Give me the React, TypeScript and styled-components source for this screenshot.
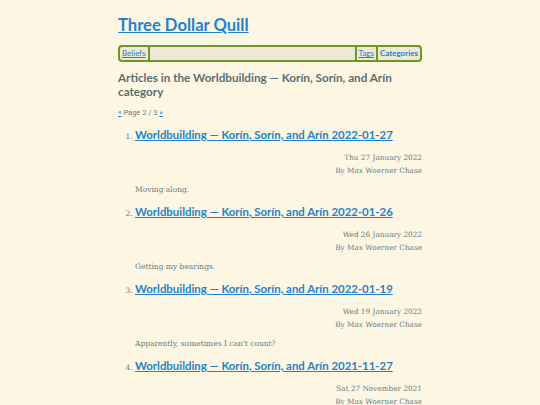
import React from "react"
import styled, { createGlobalStyle } from "styled-components"

const GlobalStyle = createGlobalStyle`
  html, body {
    margin: 0;
    padding: 0;
    background: #fdf6e3;
  }
  body {
    font-family: "DejaVu Serif", "Liberation Serif", serif;
    color: #657b83;
  }
`

type Article = {
  date: string
  longDate: string
  summary: string
}

const articles: Article[] = [
  { date: "2022-01-27", longDate: "Thu 27 January 2022", summary: "Moving along." },
  { date: "2022-01-26", longDate: "Wed 26 January 2022", summary: "Getting my bearings." },
  { date: "2022-01-19", longDate: "Wed 19 January 2022", summary: "Apparently, sometimes I can't count?" },
  { date: "2021-11-27", longDate: "Sat 27 November 2021", summary: "Still here." },
]

const headingFont = `"Lato", "Roboto", "Noto Sans", sans-serif`

export default function App() {
  return (
    <>
      <GlobalStyle />
      <Page>
        <SiteTitle>
          <a href="#">Three Dollar Quill</a>
        </SiteTitle>
        <Nav>
          <NavItem $right>
            <a href="#">Beliefs</a>
          </NavItem>
          <Spacer />
          <NavItem $left $right>
            <a href="#">Tags</a>
          </NavItem>
          <NavItem $current>
            <a href="#">Categories</a>
          </NavItem>
        </Nav>
        <PageHeading>Articles in the Worldbuilding — Korín, Sorín, and Arín category</PageHeading>
        <Pager>
          <a href="#">«</a> Page 2 / 3 <a href="#">»</a>
        </Pager>
        <ArticleList>
          {articles.map((a) => (
            <ArticleItem key={a.date}>
              <ArticleTitle>
                <a href="#">Worldbuilding — Korín, Sorín, and Arín {a.date}</a>
              </ArticleTitle>
              <Meta>
                <div>{a.longDate}</div>
                <div>By Max Woerner Chase</div>
              </Meta>
              <Summary>{a.summary}</Summary>
            </ArticleItem>
          ))}
        </ArticleList>
      </Page>
    </>
  )
}

const Page = styled.div`
  width: 304px;
  margin: 0 auto;
  padding-top: 14px;
  a {
    color: #2283ca;
  }
`

const SiteTitle = styled.h1`
  margin: 0 0 9px;
  font-family: ${headingFont};
  font-size: 16.6px;
  font-weight: 700;
  line-height: 22px;
`

const Nav = styled.nav`
  display: flex;
  align-items: stretch;
  background: #eee8d5;
  border: 2px solid #6a9a1f;
  border-radius: 4px;
  font-family: ${headingFont};
  font-size: 8px;
  line-height: 13px;
`

const NavItem = styled.div<{ $left?: boolean; $right?: boolean; $current?: boolean }>`
  padding: 0 2px;
  border-left: ${(p) => (p.$left ? "2px solid #6a9a1f" : "none")};
  border-right: ${(p) => (p.$right ? "2px solid #6a9a1f" : "none")};
  font-weight: ${(p) => (p.$current ? 700 : 400)};
  a {
    text-decoration: ${(p) => (p.$current ? "none" : "underline")};
  }
`

const Spacer = styled.div`
  flex: 1;
`

const PageHeading = styled.h2`
  margin: 8px 0 10px;
  font-family: ${headingFont};
  font-size: 11.7px;
  font-weight: 700;
  line-height: 14px;
  color: #586e75;
`

const Pager = styled.p`
  margin: 0 0 7px;
  font-family: "Roboto", sans-serif;
  font-size: 7.5px;
  color: #657b83;
`

const ArticleList = styled.ol`
  margin: 0;
  padding-left: 17px;
  font-size: 7.5px;
`

const ArticleItem = styled.li`
  margin-bottom: 5px;
`

const ArticleTitle = styled.h3`
  margin: 0;
  font-family: ${headingFont};
  font-size: 11.4px;
  font-weight: 700;
  line-height: 22px;
`

const Meta = styled.div`
  margin-top: 5px;
  text-align: right;
  font-size: 7.3px;
  line-height: 13px;
`

const Summary = styled.p`
  margin: 6px 0 0;
  font-size: 7.5px;
  line-height: 13px;
`
